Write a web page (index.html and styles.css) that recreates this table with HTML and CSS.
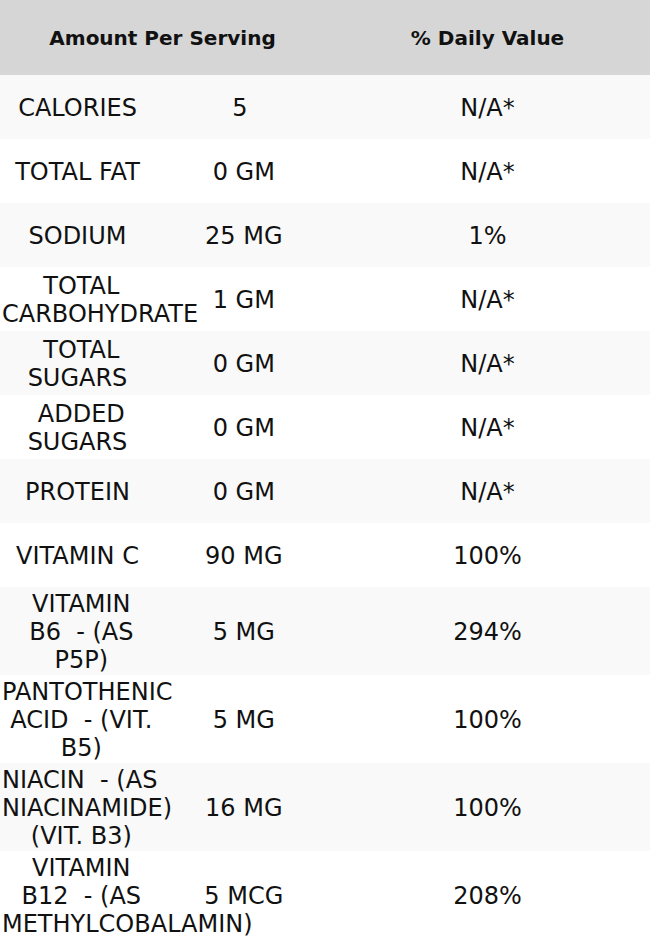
FILE: index.html
```html
<!DOCTYPE html>
<html>
<head>
<meta charset="utf-8">
<link rel="stylesheet" href="styles.css">
</head>
<body>
<table class="facts">
  <colgroup>
    <col class="c-label">
    <col class="c-amount">
    <col class="c-dv">
  </colgroup>
  <thead>
    <tr class="head">
      <th colspan="2">Amount Per Serving</th>
      <th>% Daily Value</th>
    </tr>
  </thead>
  <tbody>
    <tr class="alt"><td class="label">CALORIES</td><td class="amount">5</td><td>N/A*</td></tr>
    <tr><td class="label">TOTAL FAT</td><td class="amount"> 0 GM</td><td>N/A*</td></tr>
    <tr class="alt"><td class="label">SODIUM</td><td class="amount"> 25 MG</td><td>1%</td></tr>
    <tr><td class="label"> TOTAL<br>CARBOHYDRATE</td><td class="amount"> 1 GM</td><td>N/A*</td></tr>
    <tr class="alt"><td class="label"> TOTAL<br>SUGARS</td><td class="amount"> 0 GM</td><td>N/A*</td></tr>
    <tr><td class="label"> ADDED<br>SUGARS</td><td class="amount"> 0 GM</td><td>N/A*</td></tr>
    <tr class="alt"><td class="label">PROTEIN</td><td class="amount"> 0 GM</td><td>N/A*</td></tr>
    <tr><td class="label">VITAMIN C</td><td class="amount"> 90 MG</td><td>100%</td></tr>
    <tr class="alt"><td class="label"> VITAMIN<br> B6  - (AS<br> P5P)</td><td class="amount"> 5 MG</td><td>294%</td></tr>
    <tr><td class="label">PANTOTHENIC<br> ACID  - (VIT.<br> B5)</td><td class="amount"> 5 MG</td><td>100%</td></tr>
    <tr class="alt"><td class="label">NIACIN  - (AS<br>NIACINAMIDE)<br> (VIT. B3)</td><td class="amount"> 16 MG</td><td>100%</td></tr>
    <tr><td class="label"> VITAMIN<br> B12  - (AS<br>METHYLCOBALAMIN)</td><td class="amount"> 5 MCG</td><td>208%</td></tr>
  </tbody>
</table>
</body>
</html>
```

FILE: styles.css
```css
html, body {
  margin: 0;
  padding: 0;
  background: #ffffff;
}

body {
  font-family: "DejaVu Sans", "Liberation Sans", sans-serif;
  color: #111111;
}

.facts {
  width: 650px;
  table-layout: fixed;
  border-collapse: collapse;
  border-spacing: 0;
}

.c-label { width: 155px; }
.c-amount { width: 170px; }
.c-dv { width: 325px; }

.head {
  height: 75px;
  background: #d6d6d6;
}

.head th {
  font-size: 20px;
  font-weight: bold;
  line-height: 24px;
  text-align: center;
  vertical-align: middle;
  padding: 0 2px;
}

.facts tbody tr {
  height: 64px;
  background: #ffffff;
}

.facts tbody tr.alt {
  background: #f9f9f9;
}

.facts td {
  font-size: 24px;
  line-height: 28px;
  text-align: center;
  vertical-align: middle;
  padding: 3px 2px 1px;
  white-space: nowrap;
}

.facts td.label,
.facts td.amount {
  white-space: pre;
}
```
